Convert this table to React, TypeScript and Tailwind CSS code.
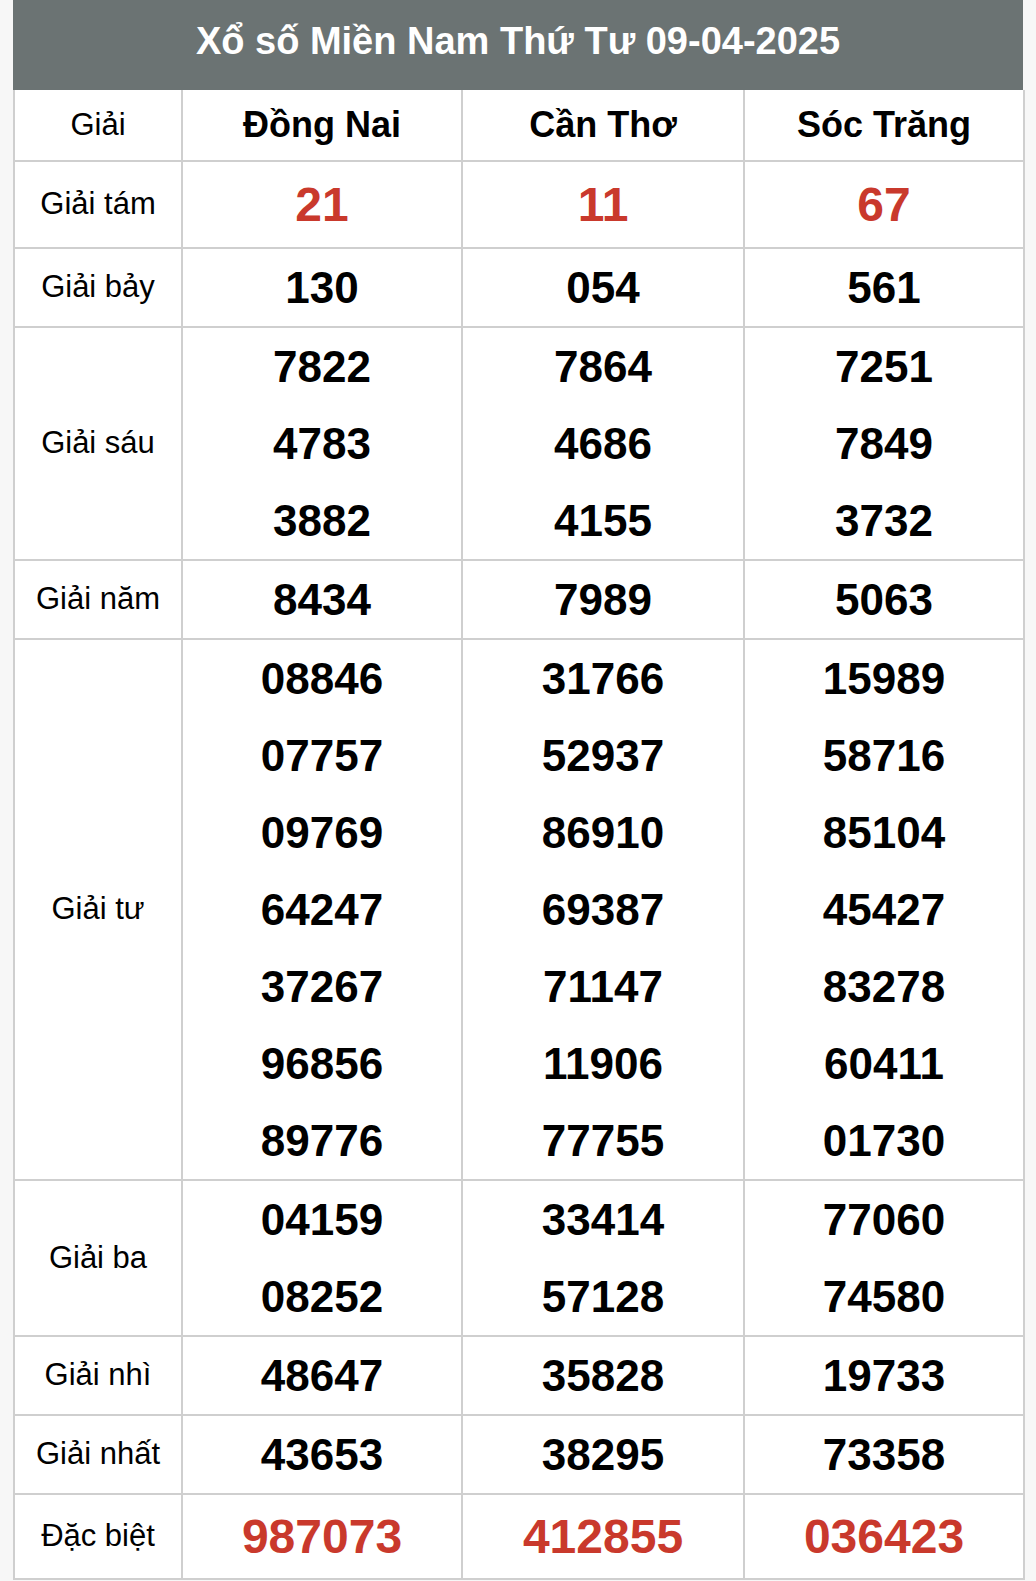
import React from 'react';

type Prize = {
  label: string;
  values: string[][];
  red?: boolean;
  h?: string;
};

const provinces = ['Đồng Nai', 'Cần Thơ', 'Sóc Trăng'];

const prizes: Prize[] = [
  { label: 'Giải tám', values: [['21'], ['11'], ['67']], red: true, h: 'h-[85px] leading-[85px]' },
  { label: 'Giải bảy', values: [['130'], ['054'], ['561']] },
  {
    label: 'Giải sáu',
    values: [
      ['7822', '4783', '3882'],
      ['7864', '4686', '4155'],
      ['7251', '7849', '3732'],
    ],
  },
  { label: 'Giải năm', values: [['8434'], ['7989'], ['5063']] },
  {
    label: 'Giải tư',
    values: [
      ['08846', '07757', '09769', '64247', '37267', '96856', '89776'],
      ['31766', '52937', '86910', '69387', '71147', '11906', '77755'],
      ['15989', '58716', '85104', '45427', '83278', '60411', '01730'],
    ],
  },
  {
    label: 'Giải ba',
    values: [
      ['04159', '08252'],
      ['33414', '57128'],
      ['77060', '74580'],
    ],
  },
  { label: 'Giải nhì', values: [['48647'], ['35828'], ['19733']] },
  { label: 'Giải nhất', values: [['43653'], ['38295'], ['73358']] },
  {
    label: 'Đặc biệt',
    values: [['987073'], ['412855'], ['036423']],
    red: true,
    h: 'h-[83px] leading-[83px]',
  },
];

export default function App() {
  return (
    <div className="min-h-screen bg-[#f7f7f7] px-[13px] font-['Liberation_Sans',Arial,sans-serif]">
      <div className="w-[1010px] bg-white">
        {/* tiêu đề */}
        <div className="h-[90px] bg-[#6b7373] text-center text-[38px] font-bold leading-[82px] text-white">
          Xổ số Miền Nam Thứ Tư 09-04-2025
        </div>

        <table className="w-[1010px] table-fixed border-collapse text-center text-black">
          <colgroup>
            <col className="w-[168px]" />
            <col className="w-[280px]" />
            <col className="w-[282px]" />
            <col className="w-[280px]" />
          </colgroup>
          <thead>
            <tr>
              <th className="border-2 border-t-0 border-[#cfcfcf] p-0 text-[31px] font-normal">
                <div className="h-[70px] leading-[70px]">Giải</div>
              </th>
              {provinces.map(p => (
                <th key={p} className="border-2 border-t-0 border-[#cfcfcf] p-0 text-[36px] font-bold">
                  <div className="h-[70px] leading-[70px]">{p}</div>
                </th>
              ))}
            </tr>
          </thead>
          <tbody>
            {prizes.map(prize => (
              <tr key={prize.label}>
                <td className="border-2 border-[#cfcfcf] p-0 text-[31px] align-middle">{prize.label}</td>
                {prize.values.map((col, i) => (
                  <td key={i} className="border-2 border-[#cfcfcf] p-0 align-middle">
                    {col.map(v => (
                      <div
                        key={v}
                        className={`${prize.h ?? 'h-[77px] leading-[77px]'} font-bold ${
                          prize.red ? 'text-[48px] text-[#c9392c]' : 'text-[44px]'
                        }`}
                      >
                        {v}
                      </div>
                    ))}
                  </td>
                ))}
              </tr>
            ))}
          </tbody>
        </table>
      </div>
    </div>
  );
}
